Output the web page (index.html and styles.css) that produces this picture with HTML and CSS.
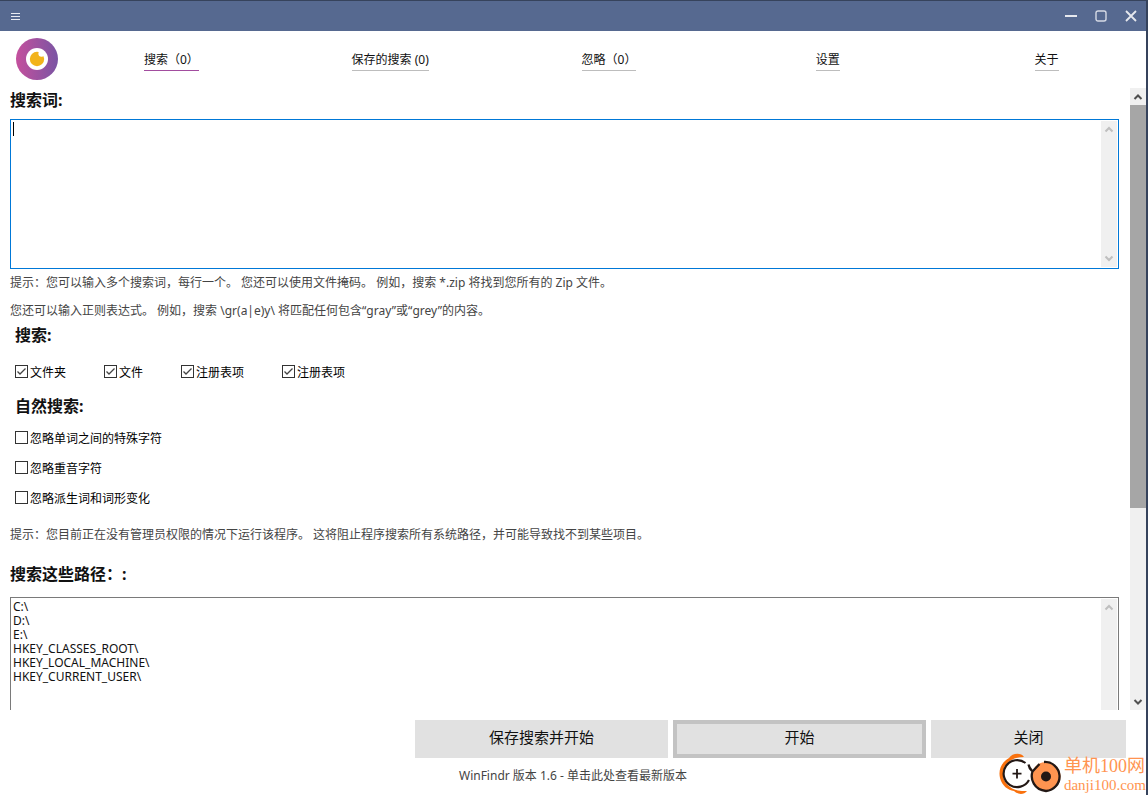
FILE: index.html
```html
<!DOCTYPE html>
<html lang="zh-CN">
<head>
<meta charset="utf-8">
<title>WinFindr</title>
<link rel="stylesheet" href="styles.css">
</head>
<body>
<div class="window">
  <header class="titlebar">
    <button class="tb-btn" aria-label="菜单"><svg width="9" height="9" viewBox="0 0 9 9"><path d="M0 1.5H9M0 4.5H9M0 7.5H9" stroke="#e8ebf2"/></svg></button>
    <div class="win-controls">
      <button class="tb-btn" aria-label="最小化"><svg width="12" height="12" viewBox="0 0 12 12"><path d="M0 6H12" stroke="#e6e8ee" stroke-width="2"/></svg></button>
      <button class="tb-btn" aria-label="最大化"><svg width="12" height="12" viewBox="0 0 12 12"><rect x="1" y="1" width="10" height="10" rx="2" fill="none" stroke="#d6dae5" stroke-width="1.4"/></svg></button>
      <button class="tb-btn" aria-label="关闭窗口"><svg width="12" height="12" viewBox="0 0 12 12"><path d="M1 1L11 11M11 1L1 11" stroke="#e6e8ee" stroke-width="1.8"/></svg></button>
    </div>
  </header>

  <div class="topbar">
    <svg class="logo" width="42" height="42" viewBox="0 0 42 42" aria-hidden="true">
      <defs><linearGradient id="ring" x1="0" x2="1" y1="0" y2="0"><stop offset="0" stop-color="#c4509d"/><stop offset="1" stop-color="#7a54a3"/></linearGradient></defs>
      <circle cx="21" cy="21" r="21" fill="url(#ring)"/>
      <circle cx="21" cy="21" r="11" fill="#fff"/>
      <circle cx="21" cy="21" r="7.2" fill="#f2b31b"/>
      <circle cx="25.6" cy="15.6" r="3.2" fill="#fff"/>
    </svg>
    <nav class="tabs">
      <a class="tab tab-active" href="#">搜索（0）</a>
      <a class="tab" href="#">保存的搜索 (0)</a>
      <a class="tab" href="#">忽略（0）</a>
      <a class="tab" href="#">设置</a>
      <a class="tab" href="#">关于</a>
    </nav>
  </div>

  <div class="viewport">
    <main class="content">
      <h2 class="heading"><label for="terms">搜索词:</label></h2>
      <div class="box box-focus">
        <textarea id="terms" class="area" autofocus></textarea>
        <div class="bar bar-inner">
          <svg class="arrow arrow-off" viewBox="0 0 16 16"><path d="M4.5 10L8 6.5L11.5 10"/></svg>
          <svg class="arrow arrow-off" viewBox="0 0 16 16"><path d="M4.5 6L8 9.5L11.5 6"/></svg>
        </div>
      </div>
      <p class="hint">提示：您可以输入多个搜索词，每行一个。 您还可以使用文件掩码。 例如，搜索 *.zip 将找到您所有的 Zip 文件。</p>
      <p class="hint">您还可以输入正则表达式。 例如，搜索 \gr(a|e)y\ 将匹配任何包含“gray”或“grey”的内容。</p>

      <h2 class="heading heading-indent">搜索:</h2>
      <div class="checks">
        <label class="check"><input type="checkbox" checked>文件夹</label>
        <label class="check"><input type="checkbox" checked>文件</label>
        <label class="check"><input type="checkbox" checked>注册表项</label>
        <label class="check"><input type="checkbox" checked>注册表项</label>
      </div>

      <h2 class="heading heading-indent">自然搜索:</h2>
      <div class="checks checks-stacked">
        <label class="check"><input type="checkbox">忽略单词之间的特殊字符</label>
        <label class="check"><input type="checkbox">忽略重音字符</label>
        <label class="check"><input type="checkbox">忽略派生词和词形变化</label>
      </div>
      <p class="hint hint-rights">提示：您目前正在没有管理员权限的情况下运行该程序。 这将阻止程序搜索所有系统路径，并可能导致找不到某些项目。</p>

      <h2 class="heading heading-paths"><label for="paths">搜索这些路径：:</label></h2>
      <div class="box">
        <textarea id="paths" class="area">C:\
D:\
E:\
HKEY_CLASSES_ROOT\
HKEY_LOCAL_MACHINE\
HKEY_CURRENT_USER\</textarea>
        <div class="bar bar-inner">
          <svg class="arrow arrow-off" viewBox="0 0 16 16"><path d="M4.5 10L8 6.5L11.5 10"/></svg>
          <svg class="arrow arrow-off" viewBox="0 0 16 16"><path d="M4.5 6L8 9.5L11.5 6"/></svg>
        </div>
      </div>
    </main>
    <div class="bar">
      <svg class="arrow" viewBox="0 0 16 16"><path d="M4.5 10.5L8 7L11.5 10.5"/></svg>
      <div class="track"><div class="thumb"></div><div class="rest"></div></div>
      <svg class="arrow" viewBox="0 0 16 16"><path d="M4.5 6.5L8 10L11.5 6.5"/></svg>
    </div>
  </div>

  <footer class="footer">
    <div class="actions">
      <button class="action">保存搜索并开始</button>
      <button class="action action-default">开始</button>
      <button class="action action-close">关闭</button>
    </div>
    <a class="version" href="#">WinFindr 版本 1.6 - 单击此处查看最新版本</a>
  </footer>

  <div class="watermark">
    <svg width="63" height="42" viewBox="0 0 63 42" aria-hidden="true">
      <path d="M25 4C22 -1 13 0 10 5C3 9 -1 16 1 25C3 33 9 37 15 38C19 42 25 42 28 38C15 39 7 33 4.500 25C2 15 9 4 25 4Z" fill="#f9710d"/>
      <circle cx="18" cy="20.5" r="14" fill="#fff"/>
      <path d="M26.5 10A13.500 13.500 0 1 0 30 27" fill="none" stroke="#231815" stroke-width="2.2"/>
      <path d="M18 16V25.500M13.500 20.700H22.500" stroke="#231815" stroke-width="1.8"/>
      <circle cx="47" cy="23.5" r="14.500" fill="#ff9450"/>
      <path d="M29.500 11.500C30 15 31 16 33.500 18.500C31 26 35 37 47 38A14.500 14.500 0 0 0 45 9M33.500 18.500L40.500 11" fill="none" stroke="#231815" stroke-width="2.3"/>
      <circle cx="47" cy="23.500" r="5" fill="#231815"/>
    </svg>
    <div class="mark-text"><span class="mark-name">单机100网</span><span class="mark-site">danji100.com</span></div>
  </div>
</div>
</body>
</html>
```
FILE: styles.css
```css
* { box-sizing: border-box; }

body {
  margin: 0;
  font: 12px/20px "Noto Sans", "Noto Sans CJK SC", sans-serif;
  color: #111;
  background: #fff;
}

button, textarea, input { font: inherit; color: inherit; margin: 0; }

.window {
  position: relative;
  display: flex;
  flex-direction: column;
  height: 100vh;
  overflow: hidden;
  border-right: 2px solid #36435c;
}

.titlebar {
  display: flex;
  justify-content: space-between;
  height: 31px;
  flex: none;
  border-top: 1px solid #36435c;
  background: #566990;
}

.tb-btn {
  display: flex;
  align-items: center;
  justify-content: center;
  width: 30px;
  height: 30px;
  padding: 0;
  border: 0;
  background: none;
}

.win-controls { display: flex; }

.topbar {
  display: flex;
  flex: none;
  height: 57px;
  padding: 7px 0 0 16px;
}

.logo { flex: none; }

.tabs {
  display: grid;
  grid-template-columns: repeat(5, 1fr);
  justify-items: center;
  align-items: start;
  flex: 1;
  margin: 0 -10px 0 4px;
  padding-top: 12px;
}

.tab {
  height: 21px;
  border-bottom: 1px solid #bdbdbd;
  color: #111;
  text-decoration: none;
  white-space: nowrap;
}

.tab-active { border-color: #a24d9f; }

.viewport {
  display: flex;
  flex: 1;
  min-height: 0;
  overflow: hidden;
}

.content {
  flex: 1;
  min-width: 0;
  padding: 0 11px 0 10px;
}

.heading {
  margin: 0;
  font-size: 16px;
  line-height: 24px;
  font-weight: 700;
}

.heading-indent { padding-left: 5px; }

.box {
  position: relative;
  display: flex;
  height: 150px;
  margin: 7px 0 4px;
  padding: 1px;
  border: 1px solid #7a7a7a;
}

.box-focus { border-color: #0078d7; }

.box-focus .area { caret-color: transparent; }

/* steady text caret */
.box-focus::before {
  content: "";
  position: absolute;
  top: 2px;
  left: 2px;
  width: 1px;
  height: 14px;
  background: #000;
}

.area {
  flex: 1;
  min-width: 0;
  padding: 1px;
  border: 0;
  outline: 0;
  resize: none;
  overflow: hidden;
  line-height: 14px;
  background: #fff;
}

.bar {
  display: flex;
  flex-direction: column;
  justify-content: space-between;
  flex: none;
  width: 16px;
  background: #f0f0f0;
}

.arrow {
  flex: none;
  width: 16px;
  height: 17px;
  fill: none;
  stroke: #505050;
  stroke-width: 2;
}

.arrow-off { stroke: #bfbfbf; }

.track {
  display: flex;
  flex-direction: column;
  flex: 1;
}

.thumb { flex: 403; background: #a6a6a6; }
.rest { flex: 185; }

.hint {
  margin: 0 0 8px;
  color: #444;
}

.hint + .heading { margin-top: -6px; }

.checks {
  display: flex;
  gap: 38px;
  padding: 16px 0 11px 5px;
}

.checks-stacked {
  flex-direction: column;
  align-items: flex-start;
  gap: 10px;
  padding: 11px 0 0 5px;
}

.check {
  display: flex;
  align-items: flex-start;
  gap: 2px;
  color: #000;
}

.check input {
  appearance: none;
  width: 13px;
  height: 13px;
  margin-top: 2px;
  border: 1px solid #333;
  background: #fff;
}

.check input:checked {
  background: url("data:image/svg+xml,%3Csvg xmlns='http://www.w3.org/2000/svg' viewBox='0 0 11 11'%3E%3Cpath d='M1.5 5.5L4 8L9.5 2.5' fill='none' stroke='%23444' stroke-width='1.3'/%3E%3C/svg%3E") center / 11px 11px no-repeat;
}

.hint-rights { margin: 16px 0 17px; }
.hint + .heading-paths { margin: 0 0 11px; }

.footer {
  display: flex;
  flex-direction: column;
  flex: none;
  height: 85px;
  padding-top: 10px;
}

.actions {
  display: flex;
  justify-content: flex-end;
  gap: 5px;
  padding-right: 20px;
}

.action {
  width: 253px;
  height: 38px;
  padding: 0 0 4px;
  border: 0;
  background: #e1e1e1;
  font-size: 15px;
}

.action-default { border: 4px solid #c3c3c3; }

.action-close { width: 195px; }

.version {
  align-self: center;
  margin-top: 8px;
  color: #444;
  text-decoration: none;
}

.watermark {
  position: absolute;
  right: 0;
  bottom: 0;
  display: flex;
  align-items: flex-start;
  gap: 2px;
  color: #ff9450;
}

.mark-text {
  display: flex;
  flex-direction: column;
  white-space: nowrap;
  padding-top: 3px;
}

.mark-name { font: 18px/20px "Liberation Serif", "Noto Sans CJK SC", serif; }
.mark-site { font: 15px/18px "Liberation Serif", serif; }
```
